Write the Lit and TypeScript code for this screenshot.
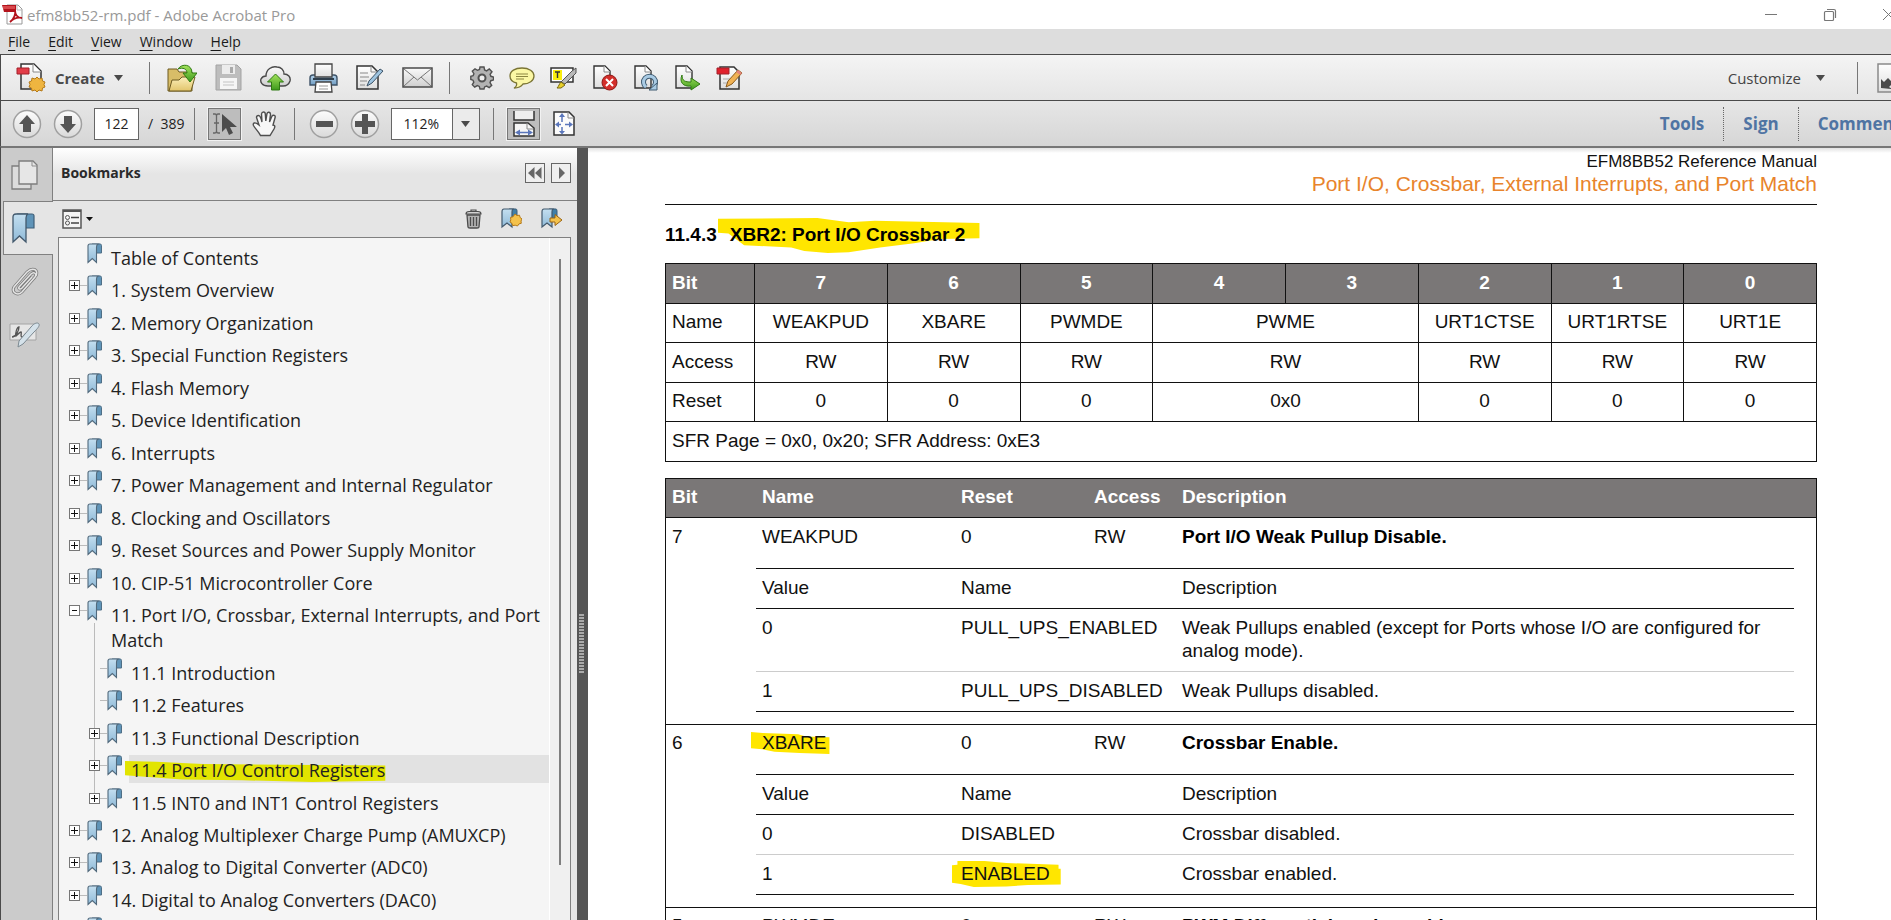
import { LitElement, html, svg, css, nothing } from "lit";
import { customElement, state } from "lit/decorators.js";

type Bookmark = { title: string; kids?: Bookmark[]; leaf?: boolean };
type Value = { value: string; name: string; text: string; marked?: boolean };
type Field = { bit: string; name: string; reset: string; access: string; title: string; marked?: boolean; values: Value[] };

const BOOKMARKS: Bookmark[] = [
  { title: "Table of Contents", leaf: true },
  { title: "1. System Overview" },
  { title: "2. Memory Organization" },
  { title: "3. Special Function Registers" },
  { title: "4. Flash Memory" },
  { title: "5. Device Identification" },
  { title: "6. Interrupts" },
  { title: "7. Power Management and Internal Regulator" },
  { title: "8. Clocking and Oscillators" },
  { title: "9. Reset Sources and Power Supply Monitor" },
  { title: "10. CIP-51 Microcontroller Core" },
  {
    title: "11. Port I/O, Crossbar, External Interrupts, and Port Match",
    kids: [
      { title: "11.1 Introduction", leaf: true },
      { title: "11.2 Features", leaf: true },
      { title: "11.3 Functional Description" },
      { title: "11.4 Port I/O Control Registers" },
      { title: "11.5 INT0 and INT1 Control Registers" },
    ],
  },
  { title: "12. Analog Multiplexer Charge Pump (AMUXCP)" },
  { title: "13. Analog to Digital Converter (ADC0)" },
  { title: "14. Digital to Analog Converters (DAC0)" },
  { title: "15. Comparators (CMP0 and CMP1)" },
];

const FIELDS: Field[] = [
  {
    bit: "7", name: "WEAKPUD", reset: "0", access: "RW", title: "Port I/O Weak Pullup Disable.",
    values: [
      { value: "0", name: "PULL_UPS_ENABLED", text: "Weak Pullups enabled (except for Ports whose I/O are configured for analog mode)." },
      { value: "1", name: "PULL_UPS_DISABLED", text: "Weak Pullups disabled." },
    ],
  },
  {
    bit: "6", name: "XBARE", reset: "0", access: "RW", title: "Crossbar Enable.", marked: true,
    values: [
      { value: "0", name: "DISABLED", text: "Crossbar disabled." },
      { value: "1", name: "ENABLED", text: "Crossbar enabled.", marked: true },
    ],
  },
  { bit: "5", name: "PWMDE", reset: "0", access: "RW", title: "PWM Differential mode enable.", values: [] },
];

const icon = (w: number, h: number, body: unknown) =>
  html`<svg class="icon" width=${w} height=${h} viewBox="0 0 ${w} ${h}" fill="none" aria-hidden="true">${body}</svg>`;

const caret = icon(9, 6, svg`<path d="M0 0h9L4.5 6z" fill="#4a4a4a"/>`);

const page = svg`<path d="M2 1h11l5 5v17H2z" fill="url(#paper)" stroke="#333" stroke-width="1.4"/><path d="M12 1v6h6" fill="#fff" stroke="#8a8a8a"/>`;

const I = {
  app: icon(21, 21, svg`<path d="M5 1h11l4 4v15H5z" fill="#fff" stroke="#999"/><path d="M15 1v5h5" stroke="#bbb"/><path d="M0 1h14v7H2z" fill="#b3131c"/><path d="M1 2h12v3H1z" fill="#d8484c"/><path d="M8 18c4-3 6-8 5-12 0 5 3 8 7 8-4-1-9 1-12 4z" stroke="#b3131c" stroke-width="1.8"/>`),
  create: icon(30, 29, svg`<path d="M5 1h13l7 7v18H5z" fill="url(#paper)" stroke="#333" stroke-width="1.5"/><path d="M17 1v8h8" fill="#fff" stroke="#888"/><path d="M1 5h12v6H1z" fill="#e23c48" stroke="#a3202b"/><path d="m21 14 2 2 3-1 .5 3 2.500 1-1 2.500 1 2.500-2.500 1-.5 3-3-1-2 2-2-2-3 1-.5-3-2.500-1 1-2.500-1-2.500 2.500-1 .5-3 3 1z" fill="#efb540" stroke="#b57a1a"/>`),
  open: icon(31, 30, svg`<path d="M2 6h9l2 3h13v19H2z" fill="#d8bd68" stroke="#6d5a20"/><path d="m3 28 3-11h7l3-3h13l-4 14z" fill="url(#sand)" stroke="#6d5a20"/><path d="M12 6c4-6 14-5 14 4h5l-7 9-7-9h4c0-4-4-6-9-4z" fill="url(#green)" stroke="#2f7a12"/>`),
  save: icon(27, 27, svg`<path d="M1 1h21l4 4v21H1z" fill="#bdbdbd" stroke="#a3a3a3"/><path d="M7 1h13v9H7z" fill="#ececec"/><path d="M15 3h3v6h-3z" fill="#aaa"/><path d="M5 14h17v11H5z" fill="#f6f6f6"/><path d="M8 18h11M8 21h11" stroke="#c4c4c4"/>`),
  cloud: icon(31, 26, svg`<path d="M8 21C2 21 0 17 1 14c1-2 3-3 5-3C6 4 12 1 17 2c4 0 7 3 7 7 4 0 7 3 6 7-1 3-4 5-7 5z" fill="url(#steel)" stroke="#4a4a4a" stroke-width="1.400"/><path d="m15.500 9 8 8h-4v8h-8v-8h-4z" fill="url(#green)" stroke="#2f7a12"/>`),
  print: icon(29, 30, svg`<path d="M1 15q0-3 3-3h21q3 0 3 3v7H1z" fill="url(#blue)" stroke="#3d5266" stroke-width="1.400"/><path d="M6 1h17v13H6z" fill="url(#paper)" stroke="#444" stroke-width="1.300"/><path d="M4 16h21" stroke="#2f3f4d" stroke-width="2"/><path d="M7 19h15l1 10H6z" fill="#fff" stroke="#444" stroke-width="1.300"/><path d="M10 23h9M10 26h9" stroke="#999"/>`),
  sign: icon(28, 27, svg`<path d="M1 2h15l6 6v17H1z" fill="url(#paper)" stroke="#333" stroke-width="1.500"/><path d="M15 2v6h6M4 9h8M4 13h9M4 17h7M4 21h5" stroke="#888"/><path d="m24 5 3 2-11 12-5 3 2-5z" fill="#9ec4e0" stroke="#3e5468"/>`),
  mail: icon(31, 21, svg`<path d="M1 1h29v19H1z" fill="url(#steel)" stroke="#4a4a4a" stroke-width="1.500"/><path d="m2 2 13.500 11L29 2M2 19l10-9M29 19l-10-9" stroke="#777"/>`),
  gear: icon(24, 24, svg`<path d="M10 1h4l.6 3 2 .9L19.300 3 22 5.700l-1.900 2.600.8 2 2.600.7v3l-2.700.7-.8 2 1.700 2.600-2.500 2.400-2.600-1.600-2 .8L14 23h-4l-.7-2.600-2-.8-2.600 1.600-2.400-2.500 1.500-2.500-.8-2L.8 13.500v-3.200l2.300-.6.8-2L2.300 5.200 5 2.800l2.500 1.500 2-.8z" fill="#b2b2b2" stroke="#505050" stroke-width="1.400"/><circle cx="12" cy="12" r="3.500" fill="#eee" stroke="#505050" stroke-width="2"/>`),
  note: icon(26, 22, svg`<path d="M13 1c7 0 12 3.500 12 8s-5 8-11 8c-2 3-5 4-9 4 2-1 3-3 2.500-5C3 15 1 12 1 9c0-5 5-8 12-8z" fill="#fbf7a4" stroke="#7a7434" stroke-width="1.300"/><path d="M7 7h12M7 9.500h12M7 12h8" stroke="#8c8640"/>`),
  mark: icon(27, 23, svg`<path d="M1 2h22v14H1z" fill="#fff" stroke="#333" stroke-width="1.500"/><path d="M3 4h9v10H3z" fill="#fbee0e"/><path d="M5 6h5M7.500 6v6" stroke="#333" stroke-width="1.400"/><path d="m22 5 4-3v5L15 18l-4-2z" fill="#b9b9b9" stroke="#555"/><path d="m11 16 4 3-4 3H7c2-2 2-4 4-6z" fill="#e8d02a" stroke="#7b6b10"/>`),
  remove: icon(26, 26, svg`${page}<circle cx="17.500" cy="17.500" r="7.500" fill="#d32f2b" stroke="#8d1714"/><path d="m14 14 7 7M21 14l-7 7" stroke="#fff" stroke-width="2"/>`),
  rotate: icon(26, 26, svg`${page}<path d="M13 22a6 6 0 1 1 7 0" stroke="#3e5a70" stroke-width="5"/><path d="M13 22a6 6 0 1 1 7 0" stroke="#a9cbe4" stroke-width="3"/><path d="M16 25h8v-7z" fill="#a9cbe4" stroke="#3e5a70"/>`),
  extract: icon(27, 26, svg`${page}<path d="M8 10c0 6 3 7 9 7v-4l9 6-9 6v-4c-8 1-12-4-9-11z" fill="url(#green)" stroke="#2f7a12"/>`),
  edit: icon(27, 25, svg`<path d="M4 2h14l5 5v17H4z" fill="url(#paper)" stroke="#333" stroke-width="1.500"/><path d="M1 3h12v6H1z" fill="#e0202c" stroke="#a3202b"/><path d="M7 14h7M7 18h4" stroke="#aaa"/><path d="m22 5 4 3-10 11-6 3 2-6z" fill="#f0b254" stroke="#8a5a1d"/><path d="m22 5 4 3-2 2-4-3z" fill="#e2847c"/>`),
  up: icon(30, 30, svg`<circle cx="15" cy="15" r="13.500" fill="url(#knob)" stroke="#a0a0a0" stroke-width="1.500"/><path d="m15 6 8 9h-4v8h-8v-8H7z" fill="#555"/>`),
  down: icon(30, 30, svg`<circle cx="15" cy="15" r="13.500" fill="url(#knob)" stroke="#a0a0a0" stroke-width="1.500"/><path d="m15 24 8-9h-4V7h-8v8H7z" fill="#555"/>`),
  minus: icon(30, 30, svg`<circle cx="15" cy="15" r="13.500" fill="url(#knob)" stroke="#a0a0a0" stroke-width="1.500"/><path d="M7 12h17v6H7z" fill="#555"/>`),
  plus: icon(30, 30, svg`<circle cx="15" cy="15" r="13.500" fill="url(#knob)" stroke="#a0a0a0" stroke-width="1.500"/><path d="M12 5h6v7h7v6h-7v7h-6v-7H5v-6h7z" fill="#555"/>`),
  select: icon(26, 26, svg`<path d="M1 3h2q1.500 0 1.500 2v15q0 2-1.500 2H1M8 3H6q-1.500 0-1.500 2v15q0 2 1.500 2h2M2 12h5" stroke="#666" stroke-width="1.300"/><path d="M10 3v18l4-4 3 7 4-2-3-6h7z" fill="#4c4c4c"/>`),
  hand: icon(26, 26, svg`<path d="M7 14 4.500 6.500q0-2 2-2T10 11L9.500 3q.3-2 2-2t1.800 2l.5 7 1.200-7.500q.6-1.500 2-1.200t1.500 2L17.500 11l2.500-6q1-1.300 2.300-.6t.8 2.100L21 14q3 0 1 4l-4 6.500H8.500C7 21 3 17.500 1.500 14.500q-.8-2 .8-2.500T7 14z" fill="#f7f7f7" stroke="#4e4e4e" stroke-width="1.400"/>`),
  fitWidth: icon(22, 26, svg`<path d="M1 0v9h20V0" fill="#eee" stroke="#333" stroke-width="1.500"/><path d="M1 25V12h14l6 5v8z" fill="#f6f6f6" stroke="#333" stroke-width="1.500"/><path d="M14 12v6h6" stroke="#888"/><path d="M4 21.500h14" stroke="#5a76bb" stroke-width="1.500"/><path d="M7 18.500v6l-5-3zM15 18.500v6l5-3z" fill="#5a76bb"/>`),
  fitPage: icon(22, 25, svg`<path d="M1 1h15l5 5v18H1z" fill="#fbfbfb" stroke="#333" stroke-width="1.500"/><path d="M15 1v6h6" stroke="#888"/><path d="M9 5v6M9 16v5M4 13.500h4M12 13.500h6" stroke="#5a76bb" stroke-width="1.500"/><path d="M6 6l3-4 3 4zM6 20l3 3.500 3-3.500zM6 10.500v6l-4-3zM16 10.500v6l4-3z" fill="#5a76bb"/>`),
  pages: icon(28, 30, svg`<path d="M1 6h19v23H1z" fill="#dcdcdc" stroke="#7d7d7d" stroke-width="1.300"/><path d="M8 1h14l4 4v19H8z" fill="#e6e6e6" stroke="#7d7d7d" stroke-width="1.300"/><path d="M21 1v5h5" stroke="#8d8d8d"/>`),
  bigMark: icon(24, 31, svg`<path d="M7 1h14q2 0 2 2v12h-8z" fill="#5f94b8" stroke="#3f5f78" stroke-width="1.200"/><path d="M5 1h12q-2 1-2 4v24l-6.500-6L2 29V4q0-3 3-3z" fill="url(#mark)" stroke="#42596d" stroke-width="1.300"/>`),
  clip: icon(28, 30, svg`<path d="m8 20 12-13c3-3 6 0 4 3L11 25c-4 4-11 1-8-5L16 5c5-5 12-3 9 4M8 20c-1 2 1 3 3 1l10-11" stroke="#7a7a7a" stroke-width="3"/><path d="m8 20 12-13c3-3 6 0 4 3L11 25c-4 4-11 1-8-5L16 5c5-5 12-3 9 4M8 20c-1 2 1 3 3 1l10-11" stroke="#e4e4e4" stroke-width="1.500"/>`),
  pen: icon(32, 26, svg`<path d="M1 2h26v16H1z" fill="#e6e6e6" stroke="#a4a4a4"/><path d="M3 15c4 0 7-7 7-10-2 0-4 6-3 9 2-2 4-4 5-4s-1 5 1 5 2-3 4-3" stroke="#555" stroke-width="1.300"/><path d="M22 5c3-4 7-5 8-3s-2 5-5 8L14 22l-5 3 1-6z" fill="#d5e2ea" stroke="#7d8a92"/>`),
  options: icon(20, 20, svg`<path d="M1 1h18v18H1z" fill="#f4f4f4" stroke="#555" stroke-width="1.500"/><path d="M1 2h18" stroke="#555" stroke-width="2"/><circle cx="5.500" cy="8.500" r="2" stroke="#555"/><circle cx="5.500" cy="14" r="2" stroke="#555"/><path d="M9 8.500h8M9 14h8" stroke="#444" stroke-width="1.300"/>`),
  trash: icon(17, 20, svg`<path d="M2 6h13l-1 12q0 1-2 1H5q-2 0-2-1z" fill="#b4b4b4" stroke="#4c4c4c" stroke-width="1.300"/><path d="M5.500 8v9M8.500 8v9M11.500 8v9" stroke="#4c4c4c" stroke-width="1.300"/><path d="M1 5q0-2.500 3-2.500h9q3 0 3 2.500zM6 2V1h5v1" fill="#d2d2d2" stroke="#4c4c4c" stroke-width="1.200"/>`),
  markNew: icon(21, 21, svg`<path d="M8 1h7q1 0 1 2v8h-5z" fill="#3f7fa8" stroke="#3f5f78"/><path d="M3 1h9q-1 1-1 3v15l-5-4-5 4V4q0-3 2-3z" fill="url(#mark)" stroke="#42596d" stroke-width="1.200"/><path d="m14 6 2 1.500 2.500-.3.600 2.300L21 11l-1 2 .3 2.300-2.300.6L16.500 18l-2.300-.8-2.500.4-.8-2.300L9 14l.8-2.200-.3-2.400 2.500-.6z" fill="#f4c24c" stroke="#b57a1a"/>`),
  markNext: icon(21, 21, svg`<path d="M8 1h7q1 0 1 2v8h-5z" fill="#3f7fa8" stroke="#3f5f78"/><path d="M3 1h9q-1 1-1 3v15l-5-4-5 4V4q0-3 2-3z" fill="url(#mark)" stroke="#42596d" stroke-width="1.200"/><path d="M9 10h5V6.500l7 5.500-7 5.500V14H9z" fill="#f4c24c" stroke="#9a6414"/>`),
  smallMark: icon(15, 21, svg`<path d="M5 1h8q1.500 0 1.500 1.500V10H9z" fill="#5f94b8" stroke="#4f6f86"/><path d="M3 1h8q-1.500 1-1.500 3v15.500L5.300 15.500 1 19.500V3q0-2 2-2z" fill="url(#mark)" stroke="#51697c" stroke-width="1.100"/>`),
  min: icon(14, 14, svg`<path d="M1 6.500h12" stroke="#777"/>`),
  restore: icon(14, 14, svg`<path d="M1.500 4.500q0-1 1-1h7q1 0 1 1v7q0 1-1 1h-7q-1 0-1-1zM4 1.500h7q1.500 0 1.500 1.500v7" stroke="#777" stroke-width="1.200"/>`),
  close: icon(14, 14, svg`<path d="m1 1 11 11M12 1 1 12" stroke="#777"/>`),
  collapse: icon(14, 12, svg`<path d="M6.500 0v12L0 6zM13.500 0v12L7 6z" fill="#666"/>`),
  expand: icon(14, 12, svg`<path d="M5 0v12l6-6z" fill="#666"/>`),
  reader: icon(26, 30, svg`<path d="M1 1h25v28H1z" fill="url(#paper)" stroke="#8a8a8a" stroke-width="1.500"/><path d="M4 25V16l3 3 4-4 5 5-4 4 3 2z" fill="#4a4a4a"/>`),
};

const brush = (points: string, cls = "") =>
  html`<svg class="brush ${cls}" viewBox="0 0 100 100" preserveAspectRatio="none" aria-hidden="true"><path d=${points} /></svg>`;

@customElement("app-root")
export class AppRoot extends LitElement {
  @state() private current = "11.4 Port I/O Control Registers";
  @state() private open = new Set([BOOKMARKS[11].title]);

  static styles = css`
    :host {
      display: block;
      height: 100vh;
      overflow: hidden;
      background: #fff;
      font: 15px/20px "Open Sans", "Noto Sans", sans-serif;
      color: #222;
    }
    * { box-sizing: border-box; }
    .icon { display: block; flex: none; }
    .defs { position: absolute; width: 0; height: 0; }
    button {
      display: flex;
      align-items: center;
      justify-content: center;
      padding: 0;
      border: 0;
      background: none;
      color: inherit;
      font: inherit;
    }
    a { color: inherit; text-decoration: none; }

    /* the window reaches a little past the right edge of the screen */
    .window {
      display: flex;
      flex-direction: column;
      width: calc(100% + 24px);
      height: 100%;
    }
    .title {
      display: flex;
      align-items: center;
      gap: 4px;
      height: 29px;
      padding: 0 19px 0 2px;
      color: #999;
    }
    .title .name { flex: 1; margin: 0; font-size: inherit; font-weight: 400; }
    .title .controls { display: flex; gap: 45px; }
    .menu {
      display: flex;
      gap: 18px;
      align-items: center;
      height: 25px;
      padding: 0 8px;
      background: #ddd;
      font-size: 14px;
      color: #1a1a1a;
    }
    .menu u { text-underline-offset: 3px; }
    .bar {
      display: flex;
      align-items: center;
      height: 46px;
      border-top: 1px solid #4a4a4a;
      border-left: 1px solid #4a4a4a;
      background: linear-gradient(#f4f4f4, #e5e5e5);
      color: #444;
    }
    .bar.nav { background: linear-gradient(#e6e6e6, #d6d6d6); color: #222; }
    .group { display: flex; align-items: center; }
    .create { gap: 9px; padding-left: 15px; font-weight: 700; color: #4a4a4a; }
    .sep { width: 1px; height: 32px; background: #777; flex: none; }
    .files { gap: 18px; margin: 0 16px 0 26px; }
    .files .sep { margin-right: -2px; }
    .quick { gap: 15px; margin-left: 20px; }
    .spacer { flex: 1; }
    .customize { gap: 15px; margin-right: 32px; }
    .reader { margin: 0 12px 0 19px; }
    .arrows { gap: 11px; margin-left: 11px; }
    .pageno {
      width: 45px;
      height: 32px;
      margin-left: 11px;
      padding: 0;
      border: 1px solid #666;
      border-radius: 0;
      background: #fff;
      text-align: center;
      font: inherit;
      font-size: 14px;
      color: #222;
    }
    .total { margin: 0 10px 0 9px; font-size: 14px; white-space: pre; }
    .tool { width: 33px; height: 32px; }
    .tool.on { border: 1px solid #777; background: #bdbdbd; outline: 1px solid #f2f2f2; }
    .tools { gap: 7px; margin: 0 13px; }
    .zooms { gap: 11px; margin: 0 11px 0 14px; }
    .zoom { position: relative; width: 89px; height: 32px; margin-right: 13px; }
    .zoom select {
      width: 100%;
      height: 100%;
      padding: 0 0 0 11px;
      border: 1px solid #666;
      border-radius: 0;
      appearance: none;
      background: linear-gradient(90deg, #fff 60px, #666 60px, #666 61px, #ebebeb 61px);
      font: inherit;
      font-size: 14px;
      color: #222;
    }
    .zoom .icon { position: absolute; right: 10px; top: 13px; pointer-events: none; }
    .panes { font-size: 17px; font-weight: 700; color: #4f74a3; }
    .panes button { height: 34px; padding: 0 19px; }
    .panes button:last-child { padding-right: 14px; }
    .panes button + button { border-left: 1px dotted #666; }

    .body {
      display: grid;
      grid-template-columns: 52px 524px 11px minmax(0, 1fr);
      flex: 1;
      min-height: 0;
      border-top: 2px solid #777;
      border-left: 1px solid #4a4a4a;
    }
    .rail {
      display: flex;
      flex-direction: column;
      padding-left: 2px;
      border-right: 1px solid #808080;
      background: #cbcbcb;
    }
    .rail button { height: 53px; padding-right: 6px; }
    .rail button.on {
      height: 54px;
      margin-right: -1px;
      padding-right: 12px;
      border: 1px solid #808080;
      border-right: 0;
      background: #e5e5e5;
    }
    .panel { display: flex; flex-direction: column; min-height: 0; background: #e5e5e5; }
    .head {
      display: flex;
      align-items: center;
      gap: 6px;
      height: 53px;
      flex: none;
      padding: 0 6px 3px 8px;
      border-bottom: 1px solid #808080;
      background: linear-gradient(#fff, #e5e5e5 50%);
    }
    .head h2 { flex: 1; margin: 0; font-size: 14px; color: #2a2a2a; }
    .head button { width: 20px; height: 20px; border: 1px solid #666; background: #efefef; }
    .opts { display: flex; align-items: center; height: 36px; flex: none; padding: 0 15px 1px 9px; }
    .opts button { gap: 4px; }
    .opts .right { display: flex; gap: 19px; margin-left: auto; }
    .box {
      display: grid;
      grid-template-columns: minmax(0, 1fr) 21px;
      flex: 1;
      min-height: 0;
      margin: 0 6px 0 5px;
      border: 1px solid #808080;
      border-bottom: 0;
      background: #f5f5f5;
    }
    .track { padding: 21px 0 55px 9px; border-left: 1px solid #fff; background: #f0f0f0; }
    .thumb { width: 2px; height: 100%; background: #7f7f7f; }
    .tree { overflow: hidden; padding-top: 4px; }
    ul { margin: 0; padding: 0; list-style: none; }
    .row {
      display: grid;
      grid-template-columns: 11px 7px 15px minmax(0, 1fr);
      align-items: start;
      padding: 1px 0 3px 10px;
    }
    li:nth-child(even) > .row { padding-bottom: 4px; }
    .toggle {
      width: 11px;
      height: 11px;
      margin-top: 5px;
      border: 1px solid #777;
      background: #fff;
    }
    .dash { height: 1px; margin-top: 10px; background: #bbb; }
    .label {
      position: relative;
      margin-left: 7px;
      padding: 3px 0 0 2px;
      font-size: 18px;
      line-height: 25px;
      color: #222;
      z-index: 0;
    }
    .kids { margin-left: 20px; position: relative; }
    .kids::before {
      content: "";
      position: absolute;
      left: 15px;
      top: -34px;
      bottom: 16px;
      width: 1px;
      background: #bbb;
    }
    .kids .row { position: relative; }
    .label.on { background: #e2e2e2; }
    .ink { position: relative; }
    .brush { position: absolute; z-index: -1; overflow: visible; fill: #ffe600; }
    .brush.side { left: -6px; top: 3px; width: calc(100% + 6px); height: 21px; fill: #e2e400; }
    .split { display: flex; align-items: center; padding-top: 220px; background: #555; }
    .grip {
      width: 5px;
      height: 60px;
      margin-left: 2px;
      background: radial-gradient(circle at 1px 1px, #aaa 1px, transparent 1px) 0 0 / 2px 3px;
    }

    .doc {
      overflow: hidden;
      padding: 0 98px 0 77px;
      background: linear-gradient(#e2e2e2, #fff 5px);
      font: 19px/23px "Liberation Sans", Arial, sans-serif;
      color: #111;
    }
    .running {
      padding: 4px 0 8px;
      border-bottom: 1px solid #111;
      text-align: right;
    }
    .running p { margin: 0; font-size: 17px; line-height: 20px; }
    .running .chapter { font-size: 21px; line-height: 24px; color: #e8842c; }
    h1 { position: relative; z-index: 0; margin: 18px 0 17px; font-size: 19px; line-height: 23px; color: #000; }
    h1 .ink { margin-left: 13px; }
    .brush.heading { left: -12px; top: -6px; width: calc(100% + 26px); height: 35px; }
    .brush.name { left: -11px; top: 0; width: calc(100% + 14px); height: 22px; }
    .brush.value { left: -9px; top: -2px; width: calc(100% + 20px); height: 26px; }
    table { width: 100%; border-spacing: 0; table-layout: fixed; }
    th, td { padding: 0; text-align: left; font-weight: 400; }
    thead th { background: #7a7777; color: #fff; font-weight: 700; }
    .layout { border-collapse: collapse; }
    .layout th, .layout td { height: 40px; padding-bottom: 3px; border: 1px solid #111; text-align: center; }
    .layout tbody tr:nth-child(odd) > * { height: 39px; }
    .layout tr > :first-child { padding-left: 6px; text-align: left; }
    .layout th { font-weight: 700; }
    .first { width: 89px; }
    .fields { margin-top: 16px; border: 1px solid #111; position: relative; z-index: 0; }
    .fields thead th { padding: 6px 0 9px 6px; border-bottom: 1px solid #111; }
    .fields td { vertical-align: top; }
    .fields .cell { height: 50px; padding: 7px 0 0 6px; }
    .fields .bold { font-weight: 700; color: #000; }
    .fields .more { padding: 0 22px 12px 0; }
    .fields tbody + tbody > tr:first-child > td { border-top: 1px solid #111; }
    .fields tbody + tbody > tr:first-child > .cell { padding-top: 6px; }
    .values { border-bottom: 1px solid #111; }
    .fields .values th { padding: 7px 0 9px 6px; border-top: 1px solid #111; border-bottom: 0; background: none; color: #111; font-weight: 400; }
    .fields .values td { padding: 7px 6px 9px 6px; border-top: 1px solid #ccc; }
    .fields .values tbody > tr:first-child > td { border-top: 1px solid #111; }
    .w-bit { width: 90px; }
    .w-name { width: 199px; }
    .w-reset { width: 133px; }
    .w-access { width: 88px; }
    .w-value { width: 221px; }
  `;

  private toggle(title: string) {
    const next = new Set(this.open);
    next.has(title) ? next.delete(title) : next.add(title);
    this.open = next;
  }

  private branch(b: Bookmark, deep = false): unknown {
    const open = this.open.has(b.title);
    const on = this.current === b.title;
    return html`<li>
      <div class="row">
        ${b.leaf
          ? html`<span></span>`
          : html`<button class="toggle" aria-label="${open ? "Collapse" : "Expand"} ${b.title}" @click=${() => this.toggle(b.title)}>
              ${icon(9, 9, svg`<path d=${open ? "M2 4h5v1H2z" : "M1 4h3V1h1v3h3v1H5v3H4V5H1z"} fill="#111"/>`)}
            </button>`}
        ${b.leaf && !deep ? html`<span></span>` : html`<span class="dash"></span>`}
        ${I.smallMark}
        <a class="label ${on ? "on" : ""}" href="#" @click=${(e: Event) => { e.preventDefault(); this.current = b.title; }}
          >${on ? html`<span class="ink">${brush("M0 0L12 4L30 14L100 22V94L72 100L45 92L22 88L0 68z", "side")}${b.title}</span>` : b.title}</a
        >
      </div>
      ${b.kids && open ? html`<ul class="kids">${b.kids.map((k) => this.branch(k, true))}</ul>` : nothing}
    </li>`;
  }

  private field(f: Field) {
    return html`<tbody>
      <tr>
        <td class="cell" rowspan=${f.values.length ? 2 : 1}>${f.bit}</td>
        <td class="cell">${f.marked ? html`<span class="ink">${brush("M0 0L15 4L60 10L70 20L100 24V100L62 96L30 90L14 78L0 74z", "name")}${f.name}</span>` : f.name}</td>
        <td class="cell">${f.reset}</td>
        <td class="cell">${f.access}</td>
        <td class="cell bold">${f.title}</td>
      </tr>
      ${f.values.length
        ? html`<tr><td class="more" colspan="4">
            <table class="values">
              <thead><tr><th class="w-name">Value</th><th class="w-value">Name</th><th>Description</th></tr></thead>
              <tbody>
                ${f.values.map((v) => html`<tr>
                  <td>${v.value}</td>
                  <td>${v.marked ? html`<span class="ink">${brush("M5 0H30L50 8L98 14V30H100V90L70 92L50 98L20 100L8 88L0 84V16L5 14z", "value")}${v.name}</span>` : v.name}</td>
                  <td>${v.text}</td>
                </tr>`)}
              </tbody>
            </table>
          </td></tr>`
        : nothing}
    </tbody>`;
  }

  render() {
    const tool = (name: string, i: unknown, cls = "") => html`<button class=${cls} aria-label=${name}>${i}</button>`;
    const grad = (id: string, a: string, b: string) =>
      svg`<linearGradient id=${id} x1="0" y1="0" x2="0" y2="1"><stop offset="0" stop-color=${a}/><stop offset="1" stop-color=${b}/></linearGradient>`;
    return html`
      <svg class="defs" aria-hidden="true"><defs>
        ${grad("paper", "#ffffff", "#dedede")}${grad("sand", "#fbeeb9", "#e2c56c")}${grad("green", "#a4e35c", "#3f9a1d")}
        ${grad("steel", "#fafafa", "#cfcfcf")}${grad("blue", "#b4d2ea", "#6f9cc2")}${grad("knob", "#fdfdfd", "#d9d9d9")}${grad("mark", "#c4dff0", "#8fbad8")}
      </defs></svg>
      <div class="window">
        <header class="title">
          ${I.app}
          <p class="name">efm8bb52-rm.pdf - Adobe Acrobat Pro</p>
          <div class="controls">${tool("Minimize", I.min)}${tool("Restore", I.restore)}${tool("Close", I.close)}</div>
        </header>
        <nav class="menu">
          ${["File", "Edit", "View", "Window", "Help"].map((m) => html`<button><span><u>${m[0]}</u>${m.slice(1)}</span></button>`)}
        </nav>
        <div class="bar">
          <button class="create">${I.create}<span>Create</span>${caret}</button>
          <div class="group files">
            <span class="sep"></span>
            ${tool("Open", I.open)}${tool("Save", I.save)}${tool("Upload", I.cloud)}${tool("Print", I.print)}${tool("Sign document", I.sign)}${tool("Email", I.mail)}
          </div>
          <span class="sep"></span>
          <div class="group quick">
            ${tool("Preferences", I.gear)}${tool("Comment", I.note)}${tool("Highlight text", I.mark)}${tool("Delete pages", I.remove)}${tool("Rotate pages", I.rotate)}${tool("Extract pages", I.extract)}${tool("Edit text", I.edit)}
          </div>
          <span class="spacer"></span>
          <button class="customize">Customize ${caret}</button>
          <span class="sep"></span>
          ${tool("Reading mode", I.reader, "reader")}
        </div>
        <div class="bar nav">
          <div class="group arrows">${tool("Previous page", I.up)}${tool("Next page", I.down)}</div>
          <input class="pageno" aria-label="Page number" value="122" />
          <span class="total">/  389</span>
          <span class="sep"></span>
          <div class="group tools">${tool("Select", I.select, "tool on")}${tool("Hand", I.hand, "tool")}</div>
          <span class="sep"></span>
          <div class="group zooms">${tool("Zoom out", I.minus)}${tool("Zoom in", I.plus)}</div>
          <div class="zoom">
            <select aria-label="Zoom level"><option>112%</option><option>100%</option><option>150%</option></select>
            ${caret}
          </div>
          <span class="sep"></span>
          <div class="group tools">${tool("Fit width", I.fitWidth, "tool on")}${tool("Fit page", I.fitPage, "tool")}</div>
          <span class="spacer"></span>
          <div class="group panes"><button>Tools</button><button>Sign</button><button>Comment</button></div>
        </div>
        <div class="body">
          <aside class="rail">
            ${tool("Page thumbnails", I.pages)}${tool("Bookmarks", I.bigMark, "on")}${tool("Attachments", I.clip)}${tool("Signatures", I.pen)}
          </aside>
          <section class="panel">
            <div class="head"><h2>Bookmarks</h2>${tool("Collapse panel", I.collapse)}${tool("Expand panel", I.expand)}</div>
            <div class="opts">
              <button aria-label="Options">${I.options}${icon(7, 4, svg`<path d="M0 0h7L3.500 4z" fill="#111"/>`)}</button>
              <div class="right">${tool("Delete bookmark", I.trash)}${tool("New bookmark", I.markNew)}${tool("Find current bookmark", I.markNext)}</div>
            </div>
            <div class="box">
              <ul class="tree">${BOOKMARKS.map((b) => this.branch(b))}</ul>
              <div class="track"><div class="thumb"></div></div>
            </div>
          </section>
          <div class="split"><div class="grip"></div></div>
          <main class="doc">
            <div class="running"><p>EFM8BB52 Reference Manual</p><p class="chapter">Port I/O, Crossbar, External Interrupts, and Port Match</p></div>
            <h1>11.4.3<span class="ink">${brush("M0 2L38 0L50 12L60 8L100 14V58L85 60L75 72L62 84L50 98L42 100L33 94L28 84L10 78L4 44L0 42z", "heading")}XBR2: Port I/O Crossbar 2</span></h1>
            <table class="layout">
              <thead><tr><th class="first">Bit</th>${[7, 6, 5, 4, 3, 2, 1, 0].map((n) => html`<th>${n}</th>`)}</tr></thead>
              <tbody>
                ${[
                  ["Name", "WEAKPUD", "XBARE", "PWMDE", "PWME", "URT1CTSE", "URT1RTSE", "URT1E"],
                  ["Access", "RW", "RW", "RW", "RW", "RW", "RW", "RW"],
                  ["Reset", "0", "0", "0", "0x0", "0", "0", "0"],
                ].map((r) => html`<tr>${r.map((c, i) => html`<td colspan=${i === 4 ? 2 : 1}>${c}</td>`)}</tr>`)}
                <tr><td colspan="9">SFR Page = 0x0, 0x20; SFR Address: 0xE3</td></tr>
              </tbody>
            </table>
            <table class="fields">
              <thead><tr><th class="w-bit">Bit</th><th class="w-name">Name</th><th class="w-reset">Reset</th><th class="w-access">Access</th><th>Description</th></tr></thead>
              ${FIELDS.map((f) => this.field(f))}
            </table>
          </main>
        </div>
      </div>`;
  }
}
